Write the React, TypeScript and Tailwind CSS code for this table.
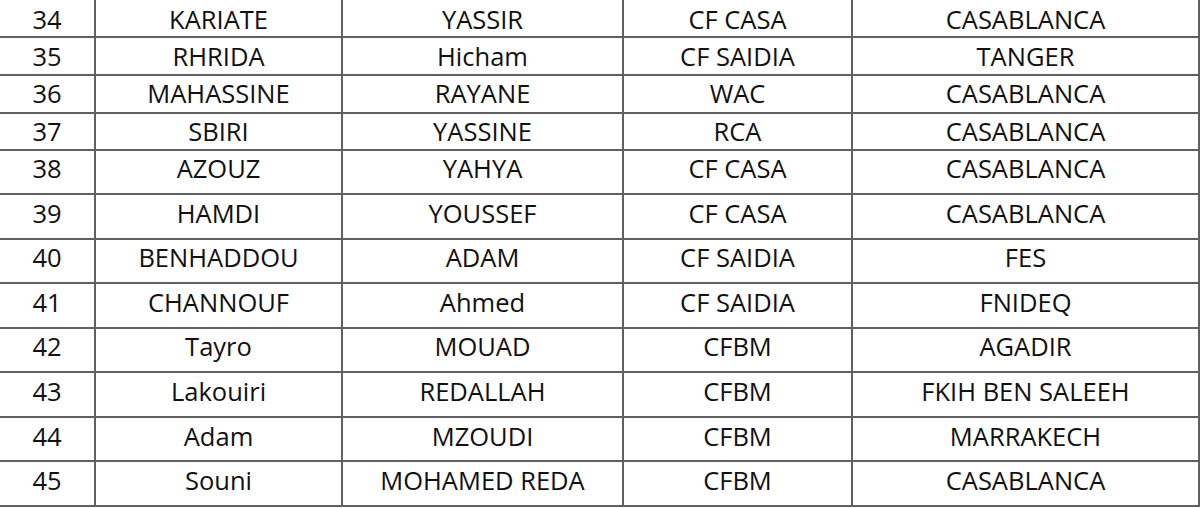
import React from 'react';

const rows = [
  { n: '34', last: 'KARIATE', first: 'YASSIR', club: 'CF CASA', city: 'CASABLANCA', h: 'h-[38px]', pad: 'pt-[3px]' },
  { n: '35', last: 'RHRIDA', first: 'Hicham', club: 'CF SAIDIA', city: 'TANGER', h: 'h-[38px]', pad: 'pt-[1px]' },
  { n: '36', last: 'MAHASSINE', first: 'RAYANE', club: 'WAC', city: 'CASABLANCA', h: 'h-[38px]', pad: '' },
  { n: '37', last: 'SBIRI', first: 'YASSINE', club: 'RCA', city: 'CASABLANCA', h: 'h-[37px]', pad: '' },
  { n: '38', last: 'AZOUZ', first: 'YAHYA', club: 'CF CASA', city: 'CASABLANCA', h: 'h-[44px]', pad: 'pb-[6px]' },
  { n: '39', last: 'HAMDI', first: 'YOUSSEF', club: 'CF CASA', city: 'CASABLANCA', h: 'h-[45px]', pad: 'pb-[6px]' },
  { n: '40', last: 'BENHADDOU', first: 'ADAM', club: 'CF SAIDIA', city: 'FES', h: 'h-[44px]', pad: 'pb-[6px]' },
  { n: '41', last: 'CHANNOUF', first: 'Ahmed', club: 'CF SAIDIA', city: 'FNIDEQ', h: 'h-[45px]', pad: 'pb-[6px]' },
  { n: '42', last: 'Tayro', first: 'MOUAD', club: 'CFBM', city: 'AGADIR', h: 'h-[44px]', pad: 'pb-[6px]' },
  { n: '43', last: 'Lakouiri', first: 'REDALLAH', club: 'CFBM', city: 'FKIH BEN SALEEH', h: 'h-[45px]', pad: 'pb-[6px]' },
  { n: '44', last: 'Adam', first: 'MZOUDI', club: 'CFBM', city: 'MARRAKECH', h: 'h-[44px]', pad: 'pb-[4px]' },
  { n: '45', last: 'Souni', first: 'MOHAMED REDA', club: 'CFBM', city: 'CASABLANCA', h: 'h-[45px]', pad: 'pb-[6px]' },
];

function Cell({ w, pad, children }: { w: string; pad: string; children: React.ReactNode }) {
  return (
    <div className={`${w} h-full flex items-center justify-center border-r-2 border-[#606060]`}>
      <span className={pad}>{children}</span>
    </div>
  );
}

export default function App() {
  return (
    <div
      className="w-[1200px] h-[508px] bg-white text-[#111] text-[25.5px] leading-none"
      style={{ fontFamily: '"Open Sans", "Noto Sans", sans-serif' }}
    >
      {rows.map((r) => (
        <div key={r.n} className={`${r.h} flex border-b-2 border-[#606060]`}>
          <Cell w="w-[96px]" pad={r.pad}>{r.n}</Cell>
          <Cell w="w-[247px]" pad={r.pad}>{r.last}</Cell>
          <Cell w="w-[281px]" pad={r.pad}>{r.first}</Cell>
          <Cell w="w-[229px]" pad={r.pad}>{r.club}</Cell>
          <Cell w="w-[347px]" pad={r.pad}>{r.city}</Cell>
        </div>
      ))}
    </div>
  );
}
